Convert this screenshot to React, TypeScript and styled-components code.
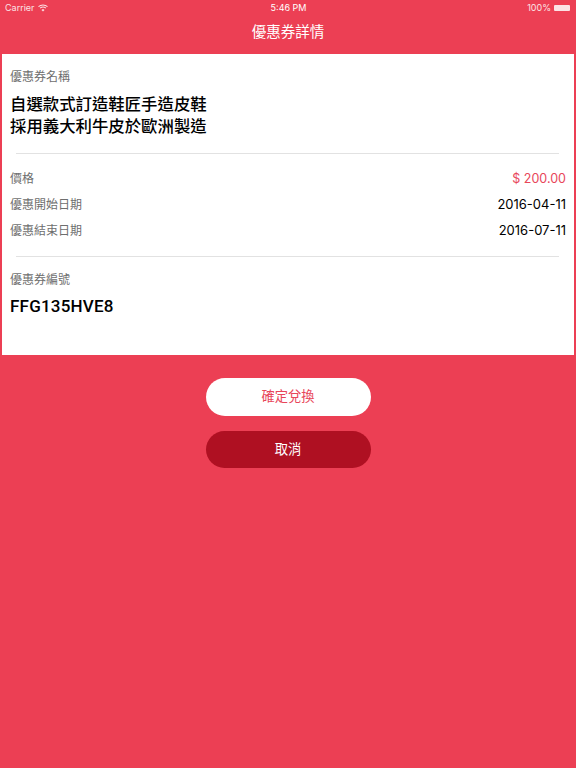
import styled, { createGlobalStyle } from "styled-components";

const GlobalStyle = createGlobalStyle`
  html, body {
    margin: 0;
    padding: 0;
    background-color: #ec3f54;
    font-family: "Liberation Sans", "Noto Sans CJK TC", sans-serif;
  }
`;

const Page = styled.div`
  width: 576px;
  height: 768px;
  overflow: hidden;
  background-color: #ec3f54;
`;

const StatusBar = styled.div`
  display: grid;
  grid-template-columns: 1fr auto 1fr;
  align-items: center;
  height: 15px;
  padding: 0 4px 0 5px;
  color: #fff;
  font-size: 9px;
  font-family: "Inter", "Liberation Sans", sans-serif;
`;

const StatusSide = styled.div<{ $end?: boolean }>`
  display: flex;
  align-items: center;
  gap: 3px;
  opacity: 0.85;
  justify-content: ${(p) => (p.$end ? "flex-end" : "flex-start")};
`;

const Battery = styled.span`
  display: block;
  width: 16px;
  height: 6px;
  background-color: #fff;
  border-radius: 1px;
  margin-right: 2px;
`;

const NavBar = styled.div`
  display: flex;
  align-items: center;
  justify-content: center;
  height: 31px;
  margin-bottom: 8px;
  color: #fff;
  font-size: 14.5px;
  font-weight: 400;
`;

const Card = styled.div`
  margin: 0 2px;
  height: 301px;
  box-sizing: border-box;
  background-color: #fff;
  padding: 15px 8px 0;
`;

const Label = styled.div`
  color: #6e6e6e;
  font-size: 12px;
  line-height: 17px;
`;

const Title = styled.div`
  margin-top: 7px;
  color: #000;
  font-size: 16.4px;
  font-weight: 500;
  line-height: 22px;
`;

const Divider = styled.hr<{ $top: number }>`
  margin: ${(p) => p.$top}px 7px 0 6px;
  border: 0;
  height: 1px;
  background-color: #e2e2e2;
`;

const Rows = styled.div<{ $top: number }>`
  display: flex;
  flex-direction: column;
  gap: 9px;
  margin-top: ${(p) => p.$top}px;
`;

const Row = styled.div`
  display: flex;
  justify-content: space-between;
  align-items: flex-start;
  height: 17px;
`;

const Value = styled.span<{ $accent?: boolean }>`
  color: ${(p) => (p.$accent ? "#e8465a" : "#000")};
  font-size: ${(p) => (p.$accent ? "12.5px" : "13px")};
  line-height: 15px;
  font-family: "Inter", "Liberation Sans", sans-serif;
`;

const Code = styled.div`
  margin-top: 7px;
  color: #000;
  font-size: 17px;
  font-weight: 500;
  line-height: 20px;
  letter-spacing: 0.2px;
  font-family: "Roboto", "Liberation Sans", sans-serif;
`;

const Actions = styled.div`
  display: flex;
  flex-direction: column;
  align-items: center;
  gap: 15px;
  margin-top: 23px;
`;

const Button = styled.button<{ $primary?: boolean }>`
  width: 165px;
  height: 37.5px;
  padding: 0 0 2px;
  border: 0;
  border-radius: 19px;
  font-family: inherit;
  font-size: 13.3px;
  font-weight: 400;
  background-color: ${(p) => (p.$primary ? "#fff" : "#af1022")};
  color: ${(p) => (p.$primary ? "#e8465a" : "#fff")};
`;

const WifiIcon = () => (
  <svg width="10" height="8" viewBox="0 0 10 8" fill="none" stroke="#fff">
    <path d="M0.5 2.6C3 0.4 7 0.4 9.5 2.6" strokeWidth="1.1" />
    <path d="M2.1 4.2C3.8 2.8 6.2 2.8 7.9 4.2" strokeWidth="1.1" />
    <path d="M3.8 5.9L5 7.2L6.2 5.9C5.5 5.3 4.5 5.3 3.8 5.9Z" fill="#fff" strokeWidth="0.6" />
  </svg>
);

export default function App() {
  return (
    <Page>
      <GlobalStyle />
      <StatusBar>
        <StatusSide>
          Carrier
          <WifiIcon />
        </StatusSide>
        <span>5:46 PM</span>
        <StatusSide $end>
          100%
          <Battery />
        </StatusSide>
      </StatusBar>
      <NavBar>優惠券詳情</NavBar>
      <Card>
        <Label>優惠券名稱</Label>
        <Title>
          自選款式訂造鞋匠手造皮鞋
          <br />
          採用義大利牛皮於歐洲製造
        </Title>
        <Divider $top={16} />
        <Rows $top={17}>
          <Row>
            <Label>價格</Label>
            <Value $accent>$ 200.00</Value>
          </Row>
          <Row>
            <Label>優惠開始日期</Label>
            <Value>2016-04-11</Value>
          </Row>
          <Row>
            <Label>優惠結束日期</Label>
            <Value>2016-07-11</Value>
          </Row>
        </Rows>
        <Divider $top={16} />
        <Rows $top={15}>
          <Label>優惠券編號</Label>
        </Rows>
        <Code>FFG135HVE8</Code>
      </Card>
      <Actions>
        <Button $primary>確定兌換</Button>
        <Button>取消</Button>
      </Actions>
    </Page>
  );
}
